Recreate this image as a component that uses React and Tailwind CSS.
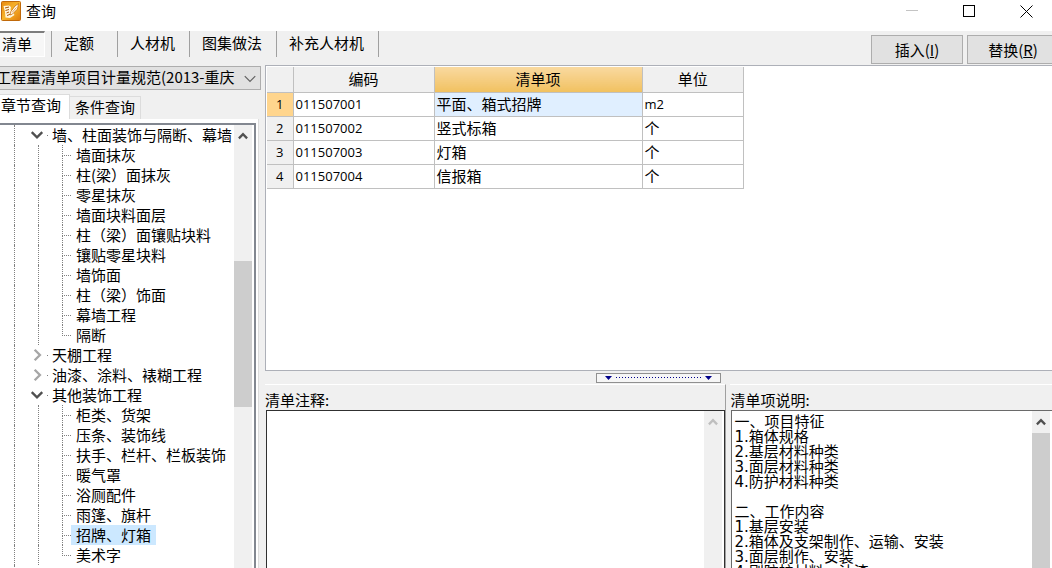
import { useState } from 'react';
import clsx from 'clsx';

const tools = ['定额', '人材机', '图集做法', '补充人材机'];

const tree = [
  {
    name: '墙、柱面装饰与隔断、幕墙',
    children: [
      '墙面抹灰',
      '柱(梁）面抹灰',
      '零星抹灰',
      '墙面块料面层',
      '柱（梁）面镶贴块料',
      '镶贴零星块料',
      '墙饰面',
      '柱（梁）饰面',
      '幕墙工程',
      '隔断',
    ],
  },
  { name: '天棚工程' },
  { name: '油漆、涂料、裱糊工程' },
  {
    name: '其他装饰工程',
    children: [
      '柜类、货架',
      '压条、装饰线',
      '扶手、栏杆、栏板装饰',
      '暖气罩',
      '浴厕配件',
      '雨篷、旗杆',
      '招牌、灯箱',
      '美术字',
    ],
  },
  { name: '拆除工程' },
];

const rows = [
  { code: '011507001', name: '平面、箱式招牌', unit: 'm2' },
  { code: '011507002', name: '竖式标箱', unit: '个' },
  { code: '011507003', name: '灯箱', unit: '个' },
  { code: '011507004', name: '信报箱', unit: '个' },
];

const description = `一、项目特征
1.箱体规格
2.基层材料种类
3.面层材料种类
4.防护材料种类

二、工作内容
1.基层安装
2.箱体及支架制作、运输、安装
3.面层制作、安装
4.刷防护材料、油漆`;

const Chevron = ({ className, d }) => (
  <svg viewBox="0 0 12 12" className={className} fill="none" stroke="currentColor">
    <path d={d} />
  </svg>
);

const UP = 'M2.5 8 6 4.5 9.5 8';
const DOWN = 'M1.5 3.5 6 8 10.5 3.5';
const RIGHT = 'M4 1.5 8.5 6 4 10.5';

const AppIcon = () => (
  <svg viewBox="0 0 20 20" className="size-5">
    <defs>
      <linearGradient id="logo" x1="0" y1="0" x2="1" y2="1">
        <stop offset="0" stopColor="#e8890f" />
        <stop offset="0.5" stopColor="#f7b52c" />
        <stop offset="1" stopColor="#e07a08" />
      </linearGradient>
    </defs>
    <rect x="0.5" y="0.5" width="19" height="19" rx="1" fill="url(#logo)" stroke="#c0690a" />
    <path d="M2.5 5 8 4.500 10 6 9.500 9 12 11 13.500 14 9 17 4.500 16.500 4 11Z" fill="#fff6dc" />
    <path d="M4 7 8 6M4.500 9.500 8 8.500M5.500 12 8 11M6 14.500 10 13" stroke="#a8540a" fill="none" />
    <path d="M17.500 2.500 16.500 8 11.500 13 9 14 9.500 11 14 5Z" fill="#fffaf0" stroke="#c86d08" strokeWidth="0.8" />
    <path d="M11 11.500 15.500 6.500" stroke="#e08a1a" strokeWidth="0.8" />
  </svg>
);

const ScrollBar = ({ className, disabled, children }) => (
  <div className={clsx('shrink-0 bg-[#f0f0f0]', className)}>
    <button
      type="button"
      aria-label="向上滚动"
      disabled={disabled}
      className={clsx('flex h-[22px] w-full items-center justify-center', disabled ? 'text-[#bfbfbf]' : 'text-[#505050]')}
    >
      <Chevron className="size-3.5 stroke-2" d={UP} />
    </button>
    {children}
  </div>
);

const TitleBar = () => (
  <header className="flex h-[31px] shrink-0 items-start bg-white">
    <div className="flex flex-1 items-center gap-[5px] pt-px pl-px">
      <AppIcon />
      <h1 className="text-[15px] leading-5">查询</h1>
    </div>
    <div className="flex h-[22px] items-center gap-11 pr-[19px]">
      <button type="button" aria-label="最小化" className="text-[#c4c4c4]">
        <svg viewBox="0 0 13 13" className="size-[13px]" stroke="currentColor">
          <path d="M0 5.500H12" />
        </svg>
      </button>
      <button type="button" aria-label="最大化">
        <svg viewBox="0 0 13 13" className="size-[13px]" fill="none" stroke="currentColor">
          <rect x="0.5" y="0.5" width="11" height="11" />
        </svg>
      </button>
      <button type="button" aria-label="关闭">
        <svg viewBox="0 0 13 13" className="size-[13px]" stroke="currentColor">
          <path d="M0.500 0.500 12.500 12.500M12.500 0.500 0.500 12.500" />
        </svg>
      </button>
    </div>
  </header>
);

const ToolBar = () => (
  <div className="flex h-[34px] shrink-0 items-start">
    <nav className="flex h-[26px] flex-1">
      <button
        type="button"
        aria-pressed="true"
        className="mr-1.5 w-[45px] border-t-2 border-r border-b border-t-[#7d7d7d] border-r-white border-b-white bg-[#f7f7f7] pb-0.5 pl-0.5 text-left"
      >
        清单
      </button>
      {tools.map((tool) => (
        <button
          key={tool}
          type="button"
          className="min-w-[66px] border-l border-[#a0a0a0] pr-3.5 pb-0.5 pl-3 text-left"
        >
          {tool}
        </button>
      ))}
      <span className="border-l border-[#a0a0a0]" />
    </nav>
    <div className="-mr-[7px] flex gap-1 pt-1">
      <button type="button" className="h-[29px] w-[92px] border border-[#adadad] bg-[#e1e1e1]">
        插入(<u>I</u>)
      </button>
      <button type="button" className="h-[29px] w-[92px] border border-[#adadad] bg-[#e1e1e1]">
        替换(<u>R</u>)
      </button>
    </div>
  </div>
);

const Tree = ({ selected, onSelect }) => (
  <ul className="min-w-0 flex-1 overflow-hidden">
    {tree.map((node) => (
      <li key={node.name}>
        <div className="flex h-5 items-center pl-3.5 whitespace-nowrap">
          <span className="h-5 w-4 border-l border-dotted border-[#808080]" />
          <button
            type="button"
            aria-label={node.name}
            aria-expanded={!!node.children}
            className={node.children ? 'text-[#505050]' : 'text-[#a6a6a6]'}
          >
            <Chevron className="size-3.5 stroke-2" d={node.children ? DOWN : RIGHT} />
          </button>
          <span className="mr-1 ml-[3px] h-px w-px bg-[#808080]" />
          {node.name}
        </div>
        {node.children && (
          <ul>
            {node.children.map((child, i) => (
              <li key={child} className="flex h-5 pl-3.5 whitespace-nowrap">
                <span className="w-6 border-l border-dotted border-[#808080]" />
                <span className="w-6 border-l border-dotted border-[#808080]" />
                <span className="w-[9px]">
                  <span className="block h-[11px] border-b border-l border-dotted border-[#808080]" />
                  {i < node.children.length - 1 && (
                    <span className="block h-[9px] border-l border-dotted border-[#808080]" />
                  )}
                </span>
                <button
                  type="button"
                  onClick={() => onSelect(child)}
                  className={clsx('px-[5px]', child === selected && 'bg-[#cce8ff]')}
                >
                  {child}
                </button>
              </li>
            ))}
          </ul>
        )}
      </li>
    ))}
  </ul>
);

const SidePanel = () => {
  const [selected, setSelected] = useState('招牌、灯箱');

  return (
    <aside className="flex w-[261px] shrink-0 flex-col pt-px">
      <div className="relative -ml-[5px] h-6">
        <select
          aria-label="清单规范"
          className="h-full w-full appearance-none border border-[#adadad] bg-[#e1e1e1] pb-0.5 text-[15px] leading-5"
        >
          <option>工程量清单项目计量规范(2013-重庆</option>
        </select>
        <Chevron className="pointer-events-none absolute top-1.5 right-1 size-3.5 text-[#606060]" d={DOWN} />
      </div>

      <div role="tablist" className="flex h-[29px] items-end pt-1">
        <button
          type="button"
          role="tab"
          aria-selected="true"
          className="h-[25px] w-[70px] border-t border-r border-[#dcdcdc] bg-white pb-1 pl-px text-left"
        >
          章节查询
        </button>
        <button
          type="button"
          role="tab"
          aria-selected="false"
          className="h-[23px] w-[71px] border-t border-r border-[#dcdcdc] pb-0.5 pl-[5px] text-left"
        >
          条件查询
        </button>
      </div>

      <div className="mr-0.5 flex min-h-0 flex-1 flex-col border-r border-[#dcdcdc] bg-white pt-1 pr-0.5">
        <div className="flex min-h-0 flex-1 border-t-2 border-r-2 border-[#828790]">
          <Tree selected={selected} onSelect={setSelected} />
          <ScrollBar className="mr-0.5 w-[18px]">
            <div className="mt-[114px] h-[146px] bg-[#cdcdcd]" />
          </ScrollBar>
        </div>
      </div>
    </aside>
  );
};

const ItemTable = () => (
  <div className="min-h-0 flex-1 border border-r-0 border-[#adb0b8] bg-white pt-px pl-px">
    <table className="w-[477px] table-fixed border-collapse">
      <colgroup>
        <col className="w-[26px]" />
        <col className="w-[141px]" />
        <col className="w-[208px]" />
        <col />
      </colgroup>
      <thead>
        <tr className="h-[25px] bg-[#f0f0f0]">
          <th aria-label="序号" className="border-r border-b border-[#c0c0c0] p-0" />
          <th className="border-r border-b border-[#c0c0c0] p-0 font-normal">编码</th>
          <th className="border-r border-b border-[#c0c0c0] bg-linear-to-b from-[#f9d99f] to-[#f1c15f] p-0 font-normal">
            清单项
          </th>
          <th className="border-r border-b border-[#c0c0c0] p-0 font-normal">单位</th>
        </tr>
      </thead>
      <tbody className="font-['Open_Sans','Noto_Sans_CJK_SC',sans-serif]">
        {rows.map((row, i) => (
          <tr key={row.code} className="h-6">
            <th
              className={clsx(
                'border-r border-b border-[#c0c0c0] p-0 text-[13px] font-normal',
                i === 0 ? 'bg-[#ffd58d]' : 'bg-[#f0f0f0]'
              )}
            >
              {i + 1}
            </th>
            <td className="border-r border-b border-[#c0c0c0] px-0.5 py-0 text-[13px]">{row.code}</td>
            <td className={clsx('border-r border-b border-[#c0c0c0] px-0.5 py-0', i === 0 && 'bg-[#e0efff]')}>
              {row.name}
            </td>
            <td className={clsx('border-r border-b border-[#c0c0c0] px-0.5 py-0', row.unit === 'm2' && 'text-[13px]')}>
              {row.unit}
            </td>
          </tr>
        ))}
      </tbody>
    </table>
  </div>
);

const Splitter = () => (
  <div className="flex h-[13px] shrink-0 items-center justify-center">
    <div className="flex h-2.5 w-[125px] items-center justify-between border border-[#909090] bg-[#f6f6f6] px-2">
      <svg viewBox="0 0 7 4" className="h-1 w-[7px]" fill="#00008b">
        <path d="M0 0H7L3.500 4Z" />
      </svg>
      <svg viewBox="0 0 86 1" className="h-px w-[86px]" stroke="#00008b" strokeDasharray="1 2">
        <path d="M0 0.500H86" />
      </svg>
      <svg viewBox="0 0 7 4" className="h-1 w-[7px]" fill="#00008b">
        <path d="M0 0H7L3.500 4Z" />
      </svg>
    </div>
  </div>
);

const Notes = () => (
  <div className="flex h-46 shrink-0">
    <div className="flex flex-[461] flex-col border-t border-r border-t-white border-r-[#a0a0a0]">
      <label htmlFor="note" className="h-[25px] pt-[5px]">
        清单注释:
      </label>
      <div className="ml-px flex flex-1 border border-b-0 border-[#303030] bg-white">
        <textarea id="note" className="flex-1 resize-none overflow-hidden p-0.5 leading-[15px] outline-none" />
        <ScrollBar disabled className="mr-0.5 w-[18px]" />
      </div>
    </div>
    <div className="ml-1 flex flex-[322] flex-col border-t border-white">
      <label htmlFor="description" className="h-[25px] pt-[5px]">
        清单项说明:
      </label>
      <div className="ml-px flex min-h-0 flex-1 border-t border-l border-[#6a6a6a] bg-white">
        <textarea
          id="description"
          readOnly
          defaultValue={description}
          className="flex-1 resize-none overflow-hidden pt-1 pl-0.5 font-['DejaVu_Sans','Noto_Sans_CJK_SC',sans-serif] leading-[15px] outline-none"
        />
        <ScrollBar className="mr-0.5 w-[18px]">
          <div className="h-full bg-[#cdcdcd]" />
        </ScrollBar>
      </div>
    </div>
  </div>
);

const App = () => (
  <div className="flex h-screen w-full flex-col overflow-hidden bg-[#f0f0f0] font-['Noto_Sans_CJK_SC',sans-serif] text-[15px] leading-5 text-black">
    <TitleBar />
    <ToolBar />
    <main className="flex min-h-0 flex-1 gap-1">
      <SidePanel />
      <section className="flex min-w-0 flex-1 flex-col">
        <ItemTable />
        <Splitter />
        <Notes />
      </section>
    </main>
  </div>
);

export default App;
